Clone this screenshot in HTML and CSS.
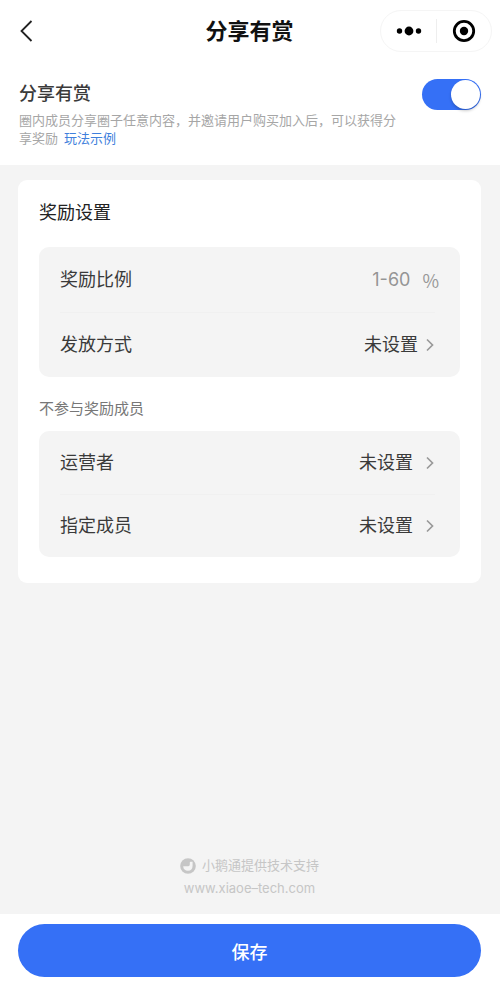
FILE: index.html
```html
<!DOCTYPE html>
<html lang="zh-CN">
<head>
<meta charset="utf-8">
<meta name="viewport" content="width=device-width, initial-scale=1">
<title>分享有赏</title>
<link rel="stylesheet" href="styles.css">
</head>
<body>
<header class="navbar">
  <button class="nav-back" type="button" aria-label="返回">
    <svg width="14" height="22" viewBox="0 0 14 22"><path d="M12.5 1 L2.5 11 L12.5 21" fill="none" stroke="#222" stroke-width="1.8"/></svg>
  </button>
  <h1 class="nav-title">分享有赏</h1>
  <div class="capsule">
    <button class="capsule-button" type="button" aria-label="更多">
      <svg width="26" height="10" viewBox="0 0 26 10"><circle cx="3.5" cy="5" r="2.7"/><circle cx="13" cy="5" r="4.4"/><circle cx="22.5" cy="5" r="2.7"/></svg>
    </button>
    <button class="capsule-button" type="button" aria-label="关闭">
      <svg width="24" height="24" viewBox="0 0 24 24"><circle cx="12" cy="12" r="9.7" fill="none" stroke="#000" stroke-width="2.8"/><circle cx="12" cy="12" r="4.2"/></svg>
    </button>
  </div>
</header>

<section class="intro">
  <div class="intro-text">
    <label class="intro-title" for="share-switch">分享有赏</label>
    <p class="intro-desc">圈内成员分享圈子任意内容，并邀请用户购买加入后，可以获得分享奖励<a class="intro-link" href="#">玩法示例</a></p>
  </div>
  <input class="switch" id="share-switch" type="checkbox" role="switch" checked>
</section>

<main class="content">
  <section class="card">
    <h2 class="card-title">奖励设置</h2>
    <div class="group group-reward">
      <div class="row">
        <label for="ratio">奖励比例</label>
        <span class="ratio"><input class="ratio-input" id="ratio" type="text" inputmode="numeric" placeholder="1-60"><span class="unit">%</span></span>
      </div>
      <button class="row" type="button">
        <span>发放方式</span>
        <span class="value value-near">未设置<svg class="chevron" width="8" height="14" viewBox="0 0 8 14"><path d="M1 1.5 L6.5 7 L1 12.5"/></svg></span>
      </button>
    </div>
    <h3 class="card-subtitle">不参与奖励成员</h3>
    <div class="group">
      <button class="row" type="button">
        <span>运营者</span>
        <span class="value">未设置<svg class="chevron" width="8" height="14" viewBox="0 0 8 14"><path d="M1 1.5 L6.5 7 L1 12.5"/></svg></span>
      </button>
      <button class="row" type="button">
        <span>指定成员</span>
        <span class="value">未设置<svg class="chevron" width="8" height="14" viewBox="0 0 8 14"><path d="M1 1.5 L6.5 7 L1 12.5"/></svg></span>
      </button>
    </div>
  </section>

  <footer class="support">
    <div class="support-brand">
      <svg width="16" height="16" viewBox="0 0 16 16"><circle cx="8" cy="8" r="7.8" fill="#c6c6c6"/><path d="M3.2 8.2 H8.3 Q9.8 8.2 9.8 6.6 V4.5 Q9.8 3.7 10.7 3.7 H12.6 V7.8 C12.6 11 10.8 12.8 8 12.8 C5.2 12.8 3.2 11 3.2 8.2 Z" fill="#f4f4f4"/></svg>
      <span>小鹅通提供技术支持</span>
    </div>
    <div class="support-url">www.xiaoe–tech.com</div>
  </footer>
</main>

<div class="action-bar">
  <button class="save" type="button">保存</button>
</div>
</body>
</html>
```
FILE: styles.css
```css
* {
  box-sizing: border-box;
}

body {
  margin: 0;
  min-height: 100vh;
  display: flex;
  flex-direction: column;
  background: #f4f4f4;
  color: #3a3a3a;
  font-family: "Liberation Sans", "Noto Sans CJK SC", sans-serif;
}

button,
input {
  margin: 0;
  padding: 0;
  border: 0;
  background: none;
  color: inherit;
  font: inherit;
}

h1,
h2,
h3,
p {
  margin: 0;
}

svg {
  display: block;
}

.navbar {
  display: grid;
  grid-template-columns: 1fr auto 1fr;
  align-items: center;
  height: 62px;
  padding: 0 8px 0 19px;
  background: #fff;
}

.nav-back {
  justify-self: start;
  width: 16px;
}

.nav-title {
  padding: 2px 12px 0 0;
  color: #111;
  font-size: 22px;
  font-weight: 700;
  line-height: 30px;
}

.capsule {
  justify-self: end;
  display: grid;
  grid-template-columns: 1fr 1fr;
  width: 112px;
  height: 42px;
  padding: 8px 0;
  border: 1px solid #f5f5f5;
  border-radius: 21px;
}

.capsule-button {
  display: grid;
  place-items: center;
}

.capsule-button + .capsule-button {
  border-left: 1px solid #eee;
}

.intro {
  display: flex;
  justify-content: space-between;
  align-items: flex-start;
  gap: 24px;
  padding: 17px 19px;
  background: #fff;
}

.intro-text {
  flex: 1;
}

.intro-title {
  display: block;
  margin-bottom: 3px;
  font-size: 18px;
  font-weight: 500;
  line-height: 30px;
}

.intro-desc {
  color: #a6a6a6;
  font-size: 13px;
  line-height: 18px;
}

.intro-link {
  margin-left: 6px;
  color: #3f7fdc;
  text-decoration: none;
}

.switch {
  appearance: none;
  display: flex;
  flex: none;
  width: 59px;
  height: 31px;
  padding: 1px;
  border-radius: 16px;
  background: #ddd;
}

.switch::before {
  content: "";
  width: 29px;
  height: 29px;
  border-radius: 50%;
  background: #fff;
  box-shadow: 0 2px 3px rgba(0, 0, 0, 0.2);
}

.switch:checked {
  justify-content: flex-end;
  background: #3570f6;
}

.content {
  flex: 1;
  display: flex;
  flex-direction: column;
  justify-content: space-between;
  padding: 15px 19px 16px 18px;
}

.card {
  padding: 19px 21px 26px;
  border-radius: 9px;
  background: #fff;
}

.card-title {
  margin-bottom: 20px;
  color: #222;
  font-size: 18px;
  font-weight: 400;
  line-height: 28px;
}

.card-subtitle {
  margin: 20px 0 10px;
  color: #777;
  font-size: 15px;
  font-weight: 400;
  line-height: 24px;
}

.group {
  border-radius: 10px;
  background: #f4f4f4;
}

.row {
  display: flex;
  justify-content: space-between;
  align-items: center;
  width: 100%;
  height: 63px;
  padding: 0 21px;
  font-size: 18px;
  line-height: 28px;
  text-align: left;
}

.group-reward .row {
  height: 65px;
}

.row + .row {
  background: linear-gradient(#f0f0f0, #f0f0f0) 21px 0 / calc(100% - 46px) 1px no-repeat;
}

.ratio {
  display: flex;
  align-items: center;
  gap: 12px;
  color: #999;
}

.ratio-input {
  width: 120px;
  height: 28px;
  font-family: Inter, sans-serif;
  text-align: right;
}

.ratio-input::placeholder {
  color: #959595;
  opacity: 1;
}

.unit {
  font-family: "Noto Sans CJK SC", sans-serif;
}

.value {
  display: flex;
  align-items: center;
  gap: 13px;
  padding-right: 5px;
}

.value-near {
  gap: 8px;
}

.chevron {
  fill: none;
  stroke: #999;
  stroke-width: 1.7;
}

.support {
  display: flex;
  flex-direction: column;
  align-items: center;
  gap: 2px;
  color: #c6c6c6;
  font-size: 13px;
  line-height: 20px;
}

.support-brand {
  display: flex;
  align-items: center;
  gap: 6px;
}

.support-url {
  font-family: Inter, sans-serif;
}

.action-bar {
  padding: 10px 19px 23px 18px;
  background: #fff;
}

.save {
  width: 100%;
  height: 53px;
  border-radius: 27px;
  background: #3570f6;
  color: #fff;
  font-size: 18px;
  font-weight: 500;
}
```
